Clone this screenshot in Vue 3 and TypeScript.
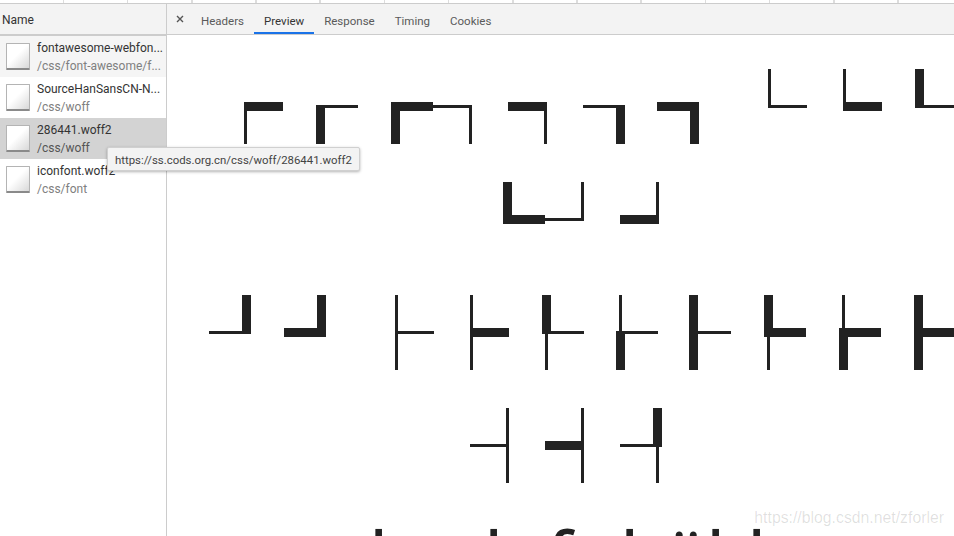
<script setup lang="ts">
type Rect = [number, number, number, number]
type Glyph = Rect[] | null

interface NetworkRow {
  name: string
  path: string
  state?: 'stripe' | 'selected'
}

const requests: NetworkRow[] = [
  { name: 'fontawesome-webfon...', path: '/css/font-awesome/f...', state: 'stripe' },
  { name: 'SourceHanSansCN-N...', path: '/css/woff' },
  { name: '286441.woff2', path: '/css/woff', state: 'selected' },
  { name: 'iconfont.woff2', path: '/css/font' }
]

const tabs = ['Headers', 'Preview', 'Response', 'Timing', 'Cookies']

// each cell is 75x113, rects are x, y, w, h inside the cell
const glyphRows: Glyph[][] = [
  [
    [[35, 33, 39, 9], [35, 33, 3, 42]],
    [[32, 36, 9, 39], [32, 36, 42, 3]],
    [[32, 33, 9, 42], [32, 33, 42, 9], [74, 36, 39, 3], [110, 36, 3, 39]],
    null,
    [[-1, 33, 39, 9], [35, 33, 3, 42]],
    [[-1, 36, 42, 3], [32, 36, 9, 39]],
    [[-2, 33, 42, 9], [31, 33, 9, 42]],
    [[34, 0, 3, 39], [34, 36, 39, 3]],
    [[34, 0, 3, 42], [34, 33, 39, 9]],
    [[31, 0, 9, 39], [31, 36, 42, 3]]
  ],
  [
    null, null, null, null,
    [[-6, 0, 9, 42], [-6, 33, 42, 9], [36, 36, 39, 3], [72, 0, 3, 39]],
    [[36, 33, 39, 9], [72, 0, 3, 42]],
    null, null, null, null
  ],
  [
    [[0, 36, 42, 3], [33, 0, 9, 39]],
    [[0, 33, 42, 9], [33, 0, 9, 42]],
    [[36, 0, 3, 75], [36, 36, 39, 3]],
    [[36, 0, 3, 75], [36, 33, 39, 9]],
    [[33, 0, 9, 39], [36, 39, 3, 36], [42, 36, 33, 3]],
    [[35, 0, 3, 36], [32, 36, 9, 39], [32, 36, 42, 3]],
    [[30, 0, 9, 75], [30, 36, 42, 3]],
    [[30, 0, 9, 42], [33, 42, 3, 33], [30, 33, 42, 9]],
    [[33, 0, 3, 33], [30, 33, 9, 42], [30, 33, 42, 9]],
    [[30, 0, 9, 75], [30, 33, 42, 9]]
  ],
  [
    null, null, null,
    [[36, 36, 36, 3], [72, 0, 3, 75]],
    [[36, 33, 36, 9], [72, 0, 3, 75]],
    [[36, 36, 33, 3], [69, 0, 9, 39], [72, 39, 3, 36]],
    null, null, null, null
  ]
]

// the last line of the preview, only the tops of the letters are on screen
const letters = [
  { ch: 'l', col: 3, dx: 10 },
  { ch: 'l', col: 4, dx: 50 },
  { ch: 'f', col: 5, dx: 37 },
  { ch: 'l', col: 6, dx: 36 },
  { ch: 'ü', col: 7, dx: 4 },
  { ch: 'l', col: 7, dx: 47 },
  { ch: 'l', col: 8, dx: 13 }
]
</script>

<template>
  <div class="devtools">
    <div class="timeline"></div>
    <div class="panels">
      <aside class="sidebar">
        <div class="name-head">Name</div>
        <ul class="request-list">
          <li
            v-for="req in requests"
            :key="req.name"
            class="request"
            :class="req.state"
          >
            <span class="file-icon"></span>
            <span class="file-text">
              <span class="file-name">{{ req.name }}</span>
              <span class="file-path">{{ req.path }}</span>
            </span>
          </li>
        </ul>
      </aside>

      <main class="detail">
        <nav class="tabbar">
          <svg class="close" width="8" height="8" viewBox="0 0 8 8">
            <path d="M1 1l6 6M7 1L1 7" />
          </svg>
          <a
            v-for="tab in tabs"
            :key="tab"
            class="tab"
            :class="{ active: tab === 'Preview' }"
          >{{ tab }}</a>
        </nav>

        <section class="preview">
          <div class="glyph-grid">
            <template v-for="(row, r) in glyphRows" :key="r">
              <div v-for="(glyph, c) in row" :key="c" class="cell">
                <svg v-if="glyph" class="glyph" width="75" height="113" viewBox="0 0 75 113">
                  <rect
                    v-for="(b, i) in glyph"
                    :key="i"
                    :x="b[0]"
                    :y="b[1]"
                    :width="b[2]"
                    :height="b[3]"
                  />
                </svg>
              </div>
            </template>
            <span
              v-for="(l, i) in letters"
              :key="'l' + i"
              class="letter"
              :style="{ gridColumn: l.col, marginLeft: l.dx + 'px' }"
            >{{ l.ch }}</span>
          </div>
        </section>
      </main>
    </div>

    <div class="tooltip">https://ss.cods.org.cn/css/woff/286441.woff2</div>
    <div class="watermark">https://blog.csdn.net/zforler</div>
  </div>
</template>

<style scoped>
.devtools {
  position: relative;
  width: 954px;
  height: 536px;
  overflow: hidden;
  display: flex;
  flex-direction: column;
  background: #fff;
  font-family: Roboto, "Noto Sans", sans-serif;
  font-size: 12px;
  color: #333;
}

.timeline {
  height: 3px;
  flex: none;
  background: repeating-linear-gradient(
    to right,
    #fff 0,
    #fff 62.6px,
    #ddd 62.6px,
    #ddd 64.2px
  );
  border-bottom: 1px solid #ccc;
}

.panels {
  flex: 1;
  min-height: 0;
  display: flex;
}

.sidebar {
  width: 166px;
  flex: none;
  border-right: 1px solid #ccc;
}

.name-head {
  height: 30px;
  line-height: 33px;
  padding-left: 2px;
  background: #f3f3f3;
  border-bottom: 2px solid #ccc;
  color: #333;
}

.request-list {
  list-style: none;
  margin: 0;
  padding: 0;
}

.request {
  height: 41px;
  display: flex;
  align-items: center;
  gap: 7px;
  padding-left: 6px;
}

.request.stripe {
  background: #f5f5f5;
}

.request.selected {
  background: #d3d3d3;
}

.file-icon {
  width: 24px;
  height: 27px;
  flex: none;
  box-sizing: border-box;
  border: 1px solid #b4b4b4;
  border-bottom: 2px solid #8a8a8a;
  border-radius: 1px;
  background: linear-gradient(135deg, #fff 45%, #d8d8d8 100%);
}

.file-text {
  display: flex;
  flex-direction: column;
  min-width: 0;
  line-height: 18px;
  white-space: nowrap;
}

.file-name {
  color: #333;
}

.file-path {
  color: #808080;
}

.request.selected .file-path {
  color: #555;
}

.detail {
  flex: 1;
  min-width: 0;
  display: flex;
  flex-direction: column;
}

.tabbar {
  height: 30px;
  flex: none;
  display: flex;
  align-items: stretch;
  background: #f3f3f3;
  border-bottom: 1px solid #ccc;
  padding-left: 9px;
}

.close {
  align-self: center;
  margin-right: 7px;
}

.close path {
  stroke: #555;
  stroke-width: 1.4;
  fill: none;
}

.tab {
  padding: 0 10px;
  font-size: 11.5px;
  line-height: 34px;
  color: #5a5a5a;
}

.tab.active {
  color: #333;
  box-shadow: inset 0 -2px 0 #1a73e8;
}

.preview {
  flex: 1;
  min-height: 0;
  overflow: hidden;
  padding: 34px 0 0 42px;
}

.glyph-grid {
  display: grid;
  grid-template-columns: repeat(10, 75px);
  grid-auto-rows: 113px;
}

.cell {
  height: 113px;
}

.glyph {
  display: block;
  overflow: visible;
  fill: #222;
}

.letter {
  font-family: "Noto Sans", sans-serif;
  font-size: 75px;
  line-height: 73px;
  color: #222;
  grid-row: 5;
}

.tooltip {
  position: absolute;
  left: 107px;
  top: 147px;
  height: 24px;
  box-sizing: border-box;
  padding: 0 7px;
  font-size: 11.4px;
  line-height: 24px;
  background: #f3f3f3;
  border: 1px solid #d0d0d0;
  border-radius: 2px;
  box-shadow: 0 1px 3px rgba(0, 0, 0, 0.3);
  color: #444;
  white-space: nowrap;
}

.watermark {
  position: absolute;
  right: 10px;
  top: 508px;
  font-family: "Liberation Sans", sans-serif;
  font-size: 15.8px;
  line-height: 20px;
  color: rgba(0, 0, 0, 0.13);
}
</style>
